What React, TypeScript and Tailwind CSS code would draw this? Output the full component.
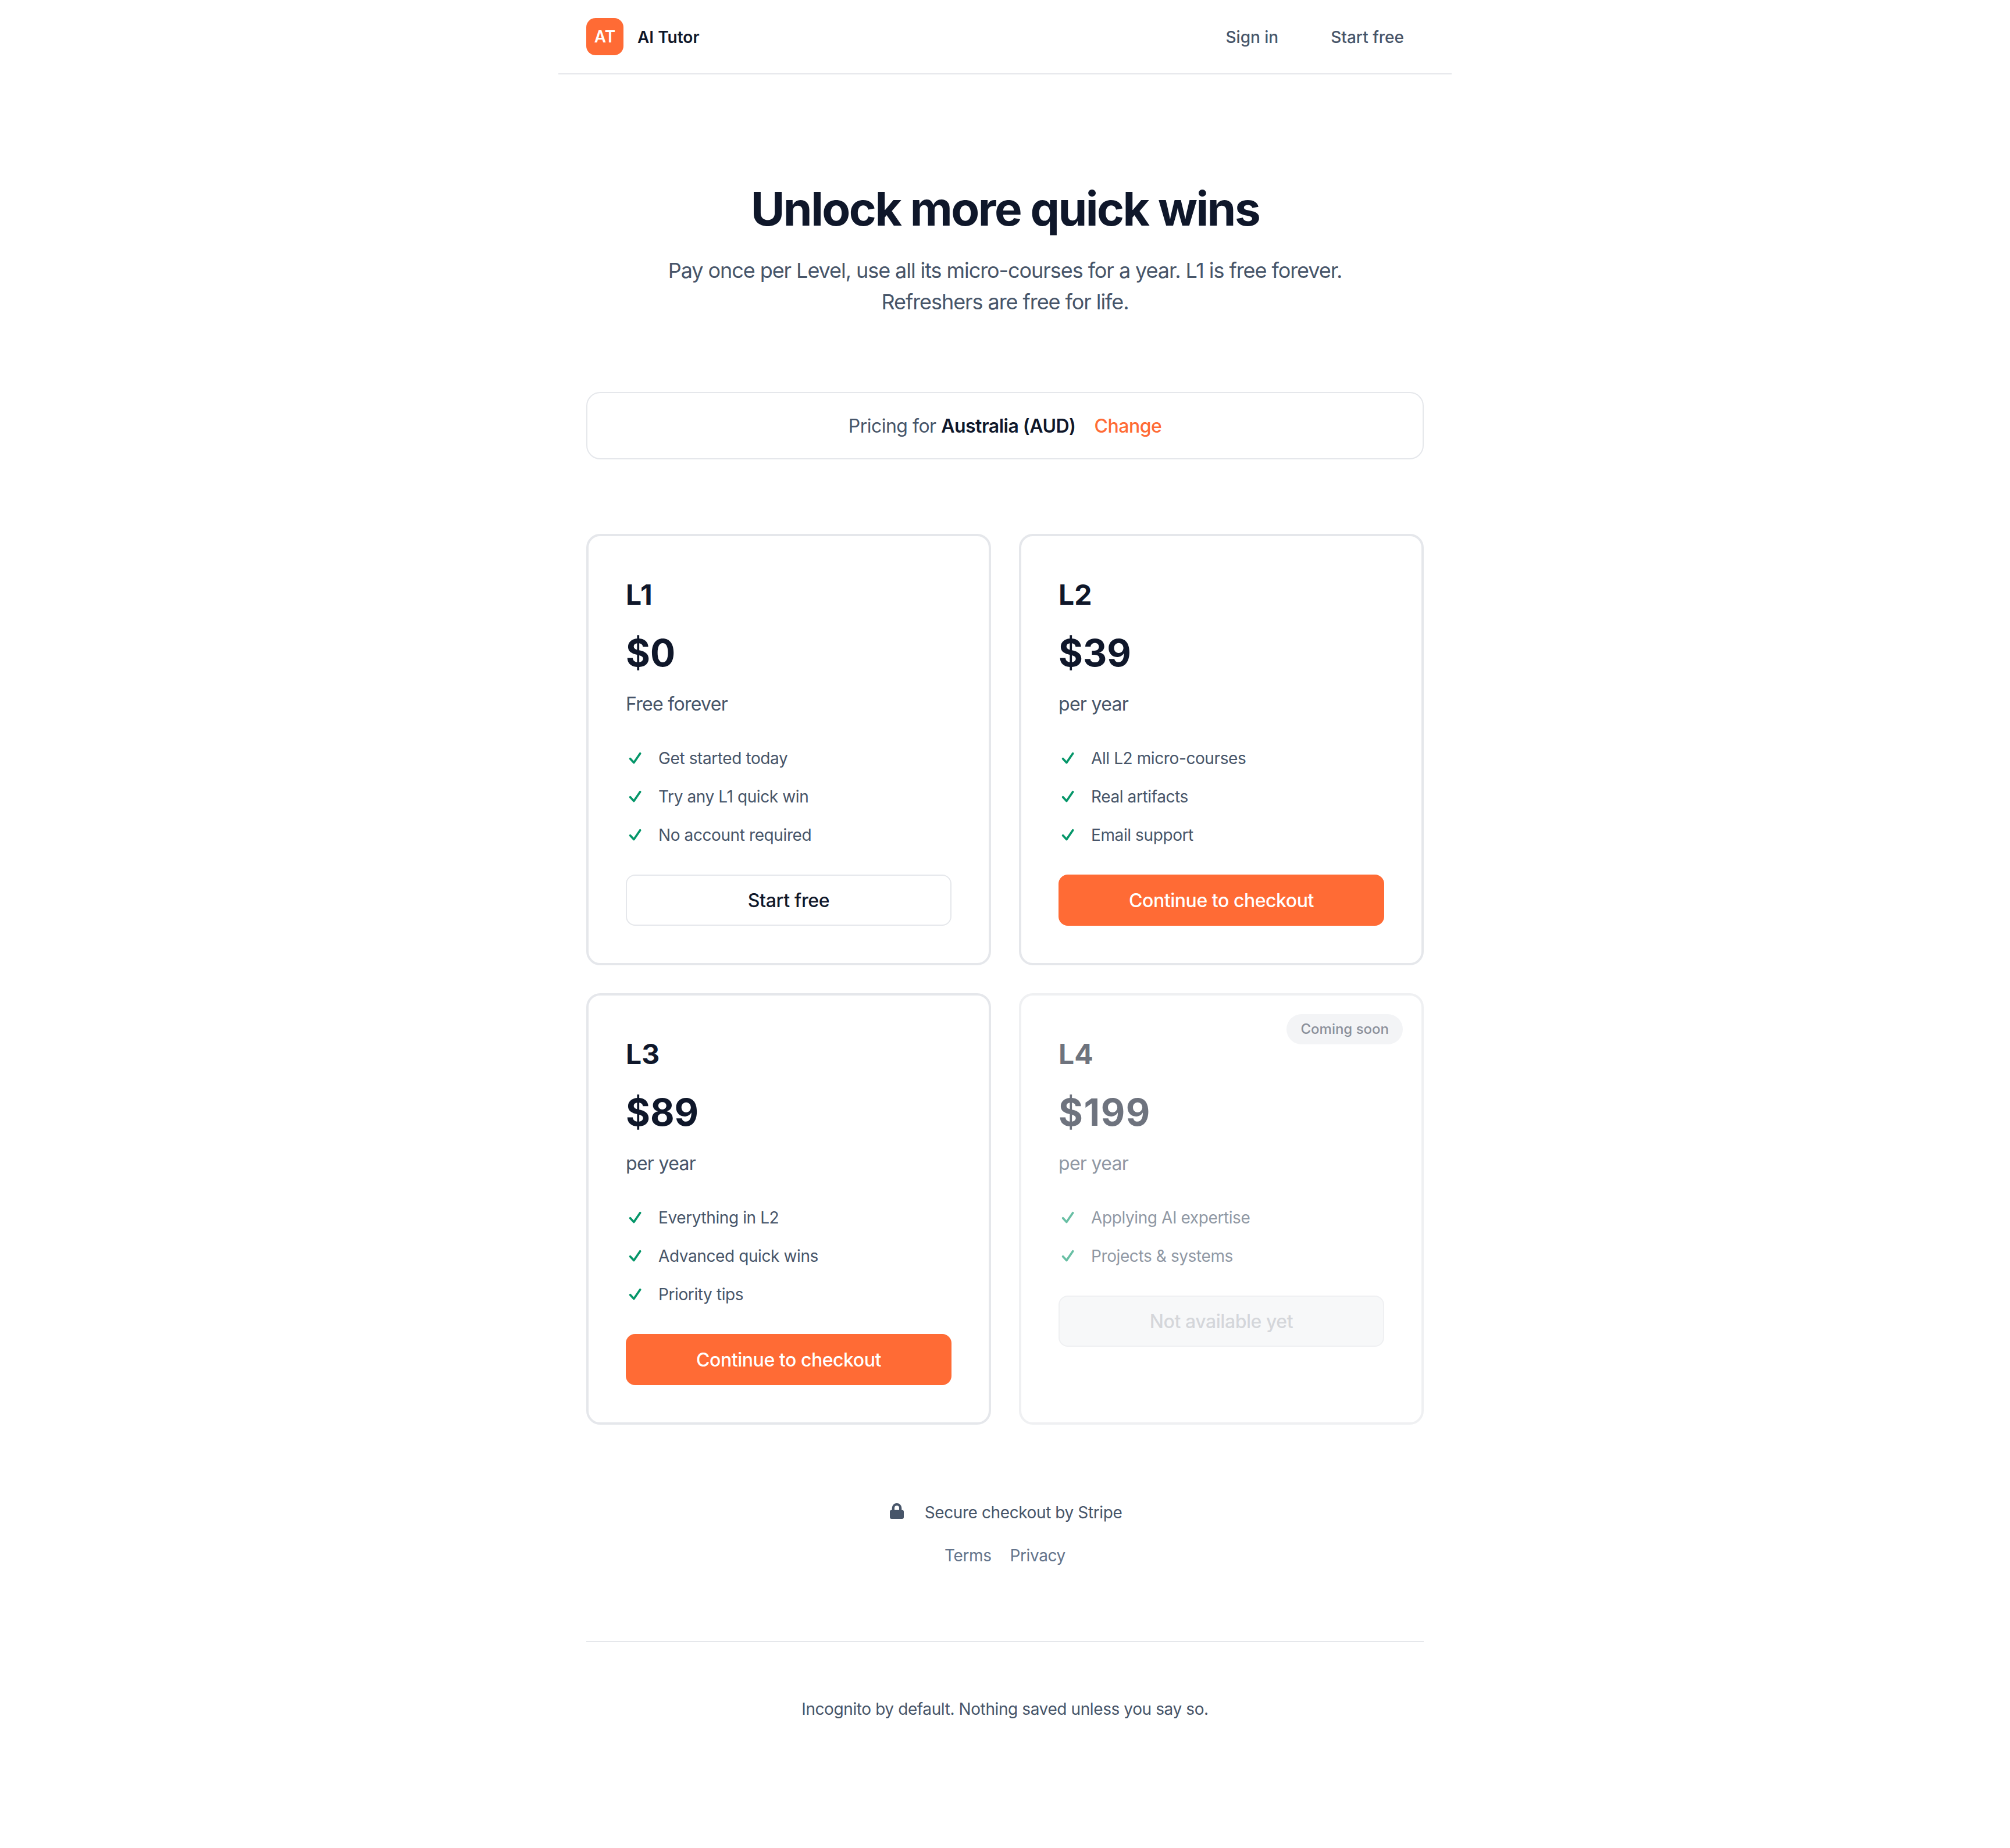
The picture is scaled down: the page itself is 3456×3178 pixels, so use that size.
type Plan = {
  level: string;
  price: string;
  note: string;
  features: string[];
  cta: string;
  kind: "outline" | "primary" | "disabled";
};

const plans: Plan[] = [
  { level: "L1", price: "$0", note: "Free forever", features: ["Get started today", "Try any L1 quick win", "No account required"], cta: "Start free", kind: "outline" },
  { level: "L2", price: "$39", note: "per year", features: ["All L2 micro-courses", "Real artifacts", "Email support"], cta: "Continue to checkout", kind: "primary" },
  { level: "L3", price: "$89", note: "per year", features: ["Everything in L2", "Advanced quick wins", "Priority tips"], cta: "Continue to checkout", kind: "primary" },
  { level: "L4", price: "$199", note: "per year", features: ["Applying AI expertise", "Projects & systems"], cta: "Not available yet", kind: "disabled" },
];

function CheckMark() {
  return (
    <svg width="32" height="32" viewBox="0 0 24 24" fill="none" stroke="currentColor" strokeWidth="2.8" strokeLinecap="round" strokeLinejoin="round" className="shrink-0 text-[#059669]">
      <path d="M5.7 12.6 10.4 17.6 18.5 5.8" />
    </svg>
  );
}

function Card({ plan }: { plan: Plan }) {
  const off = plan.kind === "disabled";
  return (
    <div className="relative">
      {off && (
        <span className="absolute right-[36px] top-[36px] z-10 rounded-full bg-[#f3f4f6] px-[24px] py-[8px] text-[24px] leading-[36px] font-medium text-[#8b909b]">
          Coming soon
        </span>
      )}
      <div className={off ? "h-full rounded-[24px] border-4 border-[#e5e7eb] bg-white px-[64px] pt-[65px] pb-[64px] opacity-60" : "h-full rounded-[24px] border-4 border-[#e5e7eb] bg-white px-[64px] pt-[65px] pb-[64px]"}>
        <h2 className="text-[48px] leading-[72px] font-bold text-[#0f172a]">{plan.level}</h2>
        <div className={off ? "mt-[24px] text-[64px] leading-[80px] font-bold tracking-[1.6px] text-[#0f172a]" : "mt-[24px] text-[64px] leading-[80px] font-bold text-[#0f172a]"}>{plan.price}</div>
        <p className="mt-[24px] text-[32px] leading-[48px] tracking-[-0.7px] text-[#475569]">{plan.note}</p>
        <ul className="mt-[48px] flex flex-col gap-[24px]">
          {plan.features.map((f) => (
            <li key={f} className="flex items-center gap-[24px] text-[28px] leading-[42px] tracking-[-0.4px] text-[#475569]">
              <CheckMark />
              <span>{f}</span>
            </li>
          ))}
        </ul>
        <button
          className={
            plan.kind === "primary"
              ? "mt-[47px] flex h-[88px] w-full items-center justify-center rounded-[16px] bg-[#ff6b35] pt-[2px] text-[32px] font-medium tracking-[-0.45px] text-white"
              : plan.kind === "outline"
                ? "mt-[47px] flex h-[88px] w-full items-center justify-center rounded-[16px] border-2 border-[#e5e7eb] bg-white pt-[2px] text-[32px] font-medium tracking-[-0.3px] text-[#0f172a]"
                : "mt-[47px] flex h-[88px] w-full items-center justify-center rounded-[16px] border-2 border-[#e5e7eb] bg-[#f3f4f6] pt-[2px] text-[32px] font-medium tracking-[-0.45px] text-[#b9bcc3]"
          }
        >
          {plan.cta}
        </button>
      </div>
    </div>
  );
}

export default function App() {
  return (
    <div className="min-h-[3178px] bg-white font-['Inter',sans-serif] text-[#0f172a]">
      <div className="mx-auto w-[1536px]">
        <header className="flex h-[128px] items-center justify-between border-b-2 border-[#e5e7eb] pl-[48px] pr-[50px]">
          <div className="flex items-center gap-[24px]">
            <div className="flex h-[64px] w-[64px] items-center justify-center rounded-[16px] bg-[#ff6b35] text-[28px] font-semibold text-white">AT</div>
            <span className="pt-[2px] text-[28px] font-semibold text-[#0f172a]">AI Tutor</span>
          </div>
          <nav className="flex items-center gap-[26px] pt-[2px] text-[28px] font-medium text-[#475569]">
            <a className="px-[32px]">Sign in</a>
            <a className="px-[32px]">Start free</a>
          </nav>
        </header>

        <main className="px-[48px]">
          <section className="pt-[183px] text-center">
            <h1 className="text-[80px] leading-[96px] font-bold tracking-[-2.5px] text-[#0f172a]">Unlock more quick wins</h1>
            <p className="mx-auto mt-[31px] w-[1200px] text-[36px] leading-[54px] tracking-[-1.07px] text-[#475569]">
              Pay once per Level, use all its micro-courses for a year. L1 is free forever. Refreshers are free for life.
            </p>
          </section>

          <div className="mt-[128px] flex h-[116px] items-center justify-center rounded-[24px] border-2 border-[#e5e7eb] pt-[2px] text-[32px] tracking-[-0.5px] text-[#475569]">
            <span>Pricing for <strong className="font-semibold text-[#0f172a]">Australia (AUD)</strong></span>
            <a className="ml-[32px] font-medium text-[#ff6b35]">Change</a>
          </div>

          <div className="mt-[128px] grid grid-cols-2 gap-x-[48px] gap-y-[48px]">
            {plans.map((p) => (
              <Card key={p.level} plan={p} />
            ))}
          </div>

          <div className="mt-[130px] flex items-center justify-center gap-[36px] pl-[3px] text-[28px] leading-[42px] tracking-[-0.4px] text-[#475569]">
            <svg width="24" height="27" viewBox="0 0 24 27" className="-mt-[5px]" fill="currentColor">
              <path d="M3 11.7h.7V8.3a8.3 8.3 0 0 1 16.6 0v3.4h.7a3 3 0 0 1 3 3V24a3 3 0 0 1-3 3H3a3 3 0 0 1-3-3v-9.3a3 3 0 0 1 3-3Zm5 0h8V8.3a4 4 0 0 0-8 0v3.4Z" />
            </svg>
            <span>Secure checkout by Stripe</span>
          </div>
          <div className="mt-[32px] flex justify-center gap-[32px] text-[28px] leading-[42px] tracking-[-0.4px] text-[#64748b]">
            <a>Terms</a>
            <a>Privacy</a>
          </div>

          <footer className="mt-[126px] border-t-2 border-[#e5e7eb] pt-[94px] text-center text-[28px] leading-[42px] tracking-[-0.4px] text-[#475569]">
            Incognito by default. Nothing saved unless you say so.
          </footer>
        </main>
      </div>
    </div>
  );
}
